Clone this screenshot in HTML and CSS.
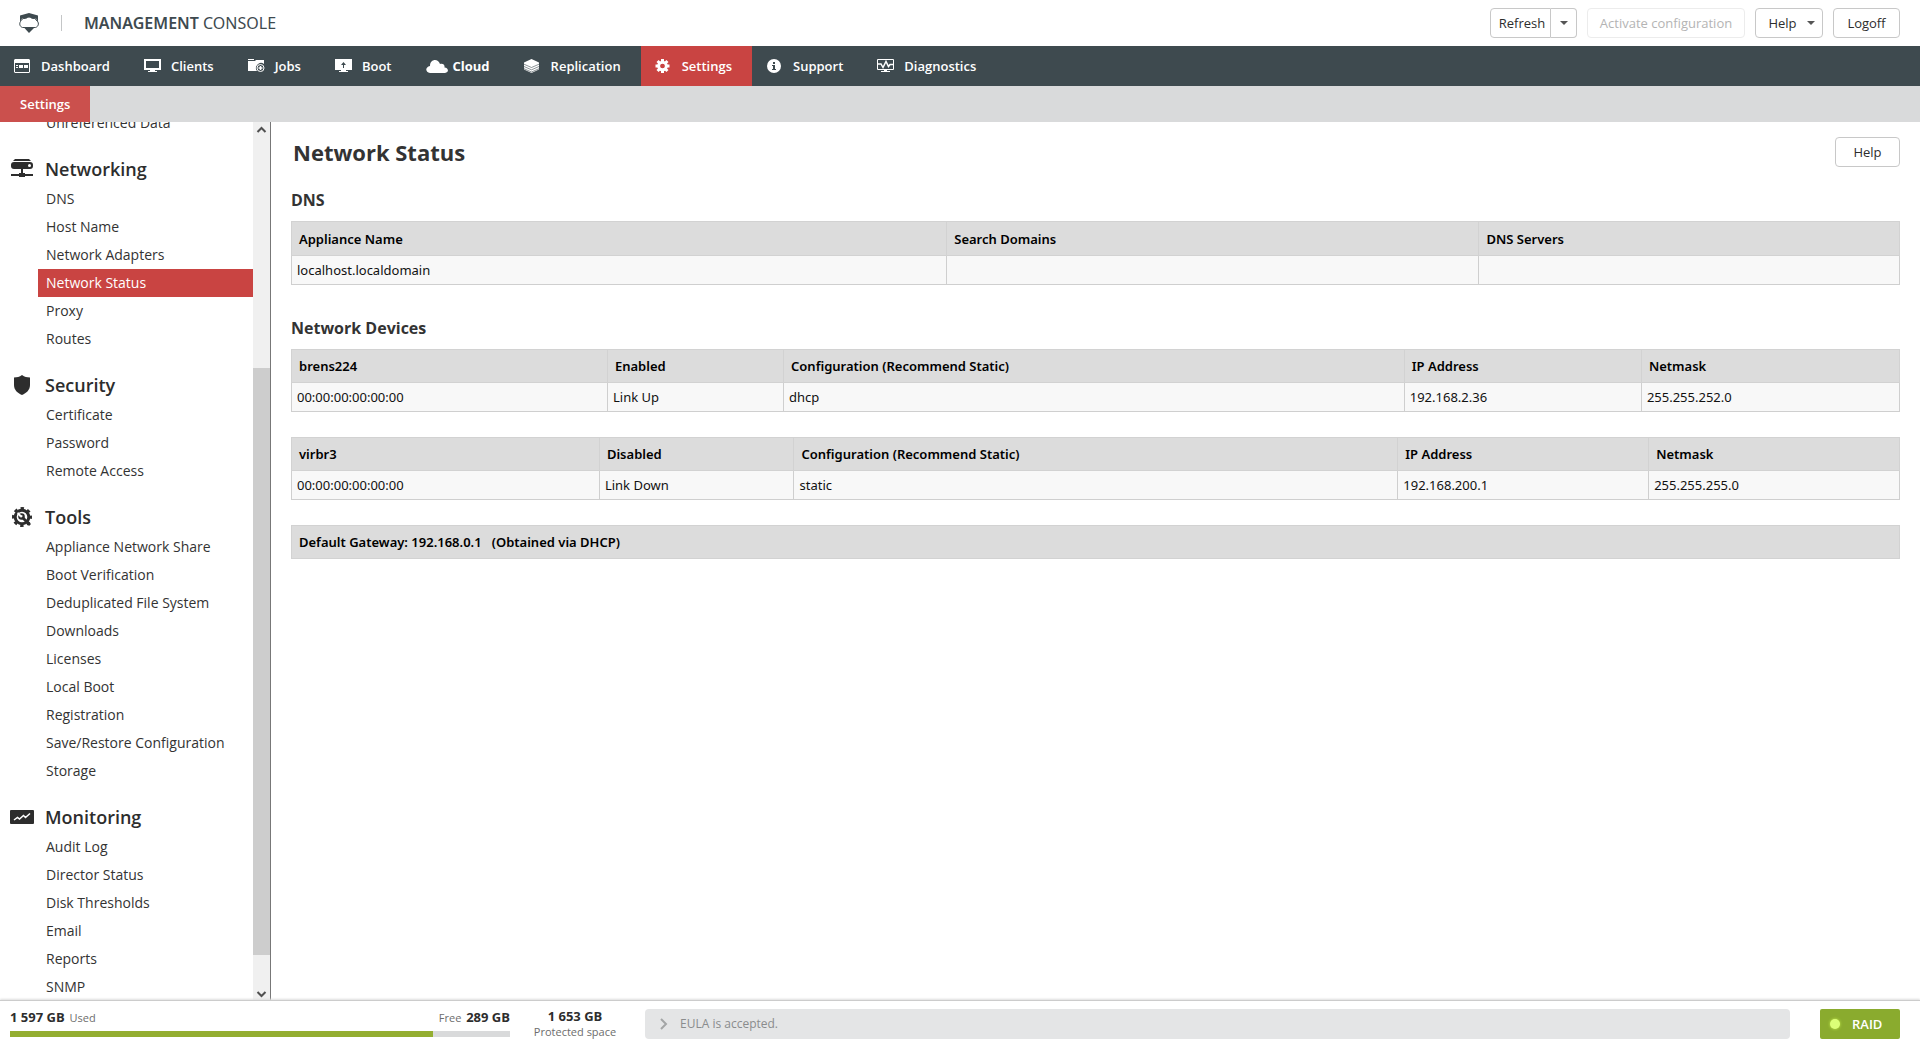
FILE: index.html
```html
<!DOCTYPE html>
<html lang="en">
<head>
<meta charset="utf-8">
<title>Management Console</title>
<link rel="stylesheet" href="styles.css">
</head>
<body>
<header class="top">
  <svg class="logo" width="20" height="20" viewBox="0 0 20 20" aria-hidden="true">
    <path fill="#3e4a4f" d="M10 0 19 2.500 19 9 17 5.500 14.500 6 10 4 5.500 6 3 5.500 1 9 1 2.500z"/>
    <path fill="#3e4a4f" d="M5 14.500h10.500L10 20z"/>
    <path fill="none" stroke="#3e4a4f" stroke-width="1" d="M3.500 14.500C.5 13.500.2 10.500 1.500 8.500 2.500 7 3 6.500 3.500 6 5 4.500 6.500 5 7 5.300 8.500 3.500 11.500 3.500 13 5.300 15 4.500 16.500 5 17 7 20.500 9 20 13.500 16.500 14.500z"/>
  </svg>
  <span class="divider"></span>
  <div class="brand"><strong>MANAGEMENT</strong> CONSOLE</div>
  <div class="actions">
    <div class="split">
      <button class="btn split-main" type="button">Refresh</button>
      <button class="btn split-more" type="button" aria-label="Refresh options"><span class="caret"></span></button>
    </div>
    <button class="btn btn-activate" type="button" disabled>Activate configuration</button>
    <button class="btn btn-menu" type="button">Help<span class="caret"></span></button>
    <button class="btn btn-logoff" type="button">Logoff</button>
  </div>
</header>

<nav class="mainnav">
  <a href="#"><span class="ico"><svg width="16" height="14" viewBox="0 0 16 14"><path fill="#fff" fill-rule="evenodd" d="M1 0h14l1 1v12l-1 1H1l-1-1V1zM1 4v9h14V4z"/><path fill="#fff" d="M2 6h2v1H2zm0 2h2v1H2zm3-2h4v3H5zm5 0h4v3h-4z"/></svg></span>Dashboard</a>
  <a href="#"><span class="ico"><svg width="17" height="14" viewBox="0 0 17 14"><path fill="#fff" fill-rule="evenodd" d="M0 0h17v11H0zM2 2v7h13V2zM6 11h5v1h2v1H4v-1h2z"/></svg></span>Clients</a>
  <a href="#"><span class="ico"><svg width="17" height="14" viewBox="0 0 17 14"><path fill="#fff" d="M0 0h6v1H0zM0 2h7l1-1h8v4a5 5 0 0 0-7 7H0z"/><circle cx="12.500" cy="9" r="3.500" fill="none" stroke="#fff"/><path stroke="#fff" stroke-width="1.500" d="M12.500 7v4M10.500 9h4"/></svg></span>Jobs</a>
  <a href="#"><span class="ico"><svg width="17" height="14" viewBox="0 0 17 14"><path fill="#fff" fill-rule="evenodd" d="M0 0h17v11h-6v1h2v1H4v-1h2v-1H0zM8.500 3 6 6h2v3h1V6h2z"/></svg></span>Boot</a>
  <a class="strong" href="#"><span class="ico"><svg width="22" height="13" viewBox="0 0 22 13"><path fill="#fff" d="M4 13C-1 12-1 7 4 6 4-1 12-2 14 4c3-1 5 1 4.500 3.500C23 8 23 12.500 19 13z"/></svg></span>Cloud</a>
  <a href="#"><span class="ico"><svg width="15" height="14" viewBox="0 0 15 14"><path fill="#fff" d="M7.500 0 15 3.500v7L7.500 14 0 10.500v-7z"/><path fill="none" stroke="#3e4a4f" stroke-width=".6" d="m0 5.200 7.500 3.300L15 5.200M0 7.500l7.500 3.300L15 7.500M0 9.700 7.500 13 15 9.700"/></svg></span>Replication</a>
  <a class="active" href="#"><span class="ico"><svg width="15" height="14" viewBox="0 0 15 14"><g fill="#fff"><path d="M6 0h3v14H6zM.5 5.500h14v3H.5z"/><path d="M6 0h3v14H6zM.5 5.500h14v3H.5z" transform="rotate(45 7.500 7)"/></g><circle cx="7.500" cy="7" r="3.800" fill="#c94442" stroke="#fff" stroke-width="3"/><circle cx="7.500" cy="7" r="2" fill="#c94442"/></svg></span>Settings</a>
  <a href="#"><span class="ico"><svg width="15" height="14" viewBox="0 0 15 14"><circle cx="8" cy="7" r="7" fill="#fff"/><path fill="#3e4a4f" d="M7 3h2v2H7zM6 6h3v4h1v1H6v-1h1V7H6z"/></svg></span>Support</a>
  <a href="#"><span class="ico"><svg width="17" height="14" viewBox="0 0 17 14"><path fill="none" stroke="#fff" d="M.5.5h16v10H.5z"/><path fill="none" stroke="#fff" stroke-width="1.500" d="M1 5h3l2 3.500 3-6 2.500 5L13 5.500h3"/><path fill="#fff" d="M7 11h3v1h3v1H4v-1h3z"/></svg></span>Diagnostics</a>
</nav>

<nav class="subnav"><a href="#">Settings</a></nav>

<div class="body">
  <aside class="side">
    <div class="menu">
      <ul><li><a href="#">Unreferenced Data</a></li></ul>
      <h2><svg width="24" height="20" viewBox="0 0 24 20"><path fill="#2d2d2d" d="M5 0h14l2 2H3z"/><rect x="1" y="3" width="22" height="7" rx="3" fill="#2d2d2d"/><path fill="#2d2d2d" d="M11 9h2v5h2v1h8v2h-8v1H9v-1H1v-2h8v-1h2z"/><circle cx="19.500" cy="6.500" r="1.500" fill="#fff"/></svg>Networking</h2>
      <ul>
        <li><a href="#">DNS</a></li>
        <li><a href="#">Host Name</a></li>
        <li><a href="#">Network Adapters</a></li>
        <li><a class="current" href="#">Network Status</a></li>
        <li><a href="#">Proxy</a></li>
        <li><a href="#">Routes</a></li>
      </ul>
      <h2><svg width="24" height="20" viewBox="0 0 24 20"><path fill="#2d2d2d" d="M12 0c2.500 1.800 5 2.500 8 2.500V10c0 5-3.500 8-8 10-4.500-2-8-5-8-10V2.500C7 2.500 9.500 1.800 12 0z"/></svg>Security</h2>
      <ul>
        <li><a href="#">Certificate</a></li>
        <li><a href="#">Password</a></li>
        <li><a href="#">Remote Access</a></li>
      </ul>
      <h2><svg width="24" height="20" viewBox="0 0 24 20"><g stroke="#2d2d2d" fill="none"><circle cx="12" cy="10" r="6.800" stroke-width="3"/><circle cx="12" cy="10" r="8.800" stroke-width="2.400" stroke-dasharray="3.450 3.460" stroke-dashoffset="1.700"/><path stroke-width="2.800" d="m12 10 8 8"/><circle cx="11.500" cy="9.500" r="2.300" stroke-width="2"/></g><path fill="#fff" d="m8 5 4 4-2 1-3-3z"/></svg>Tools</h2>
      <ul>
        <li><a href="#">Appliance Network Share</a></li>
        <li><a href="#">Boot Verification</a></li>
        <li><a href="#">Deduplicated File System</a></li>
        <li><a href="#">Downloads</a></li>
        <li><a href="#">Licenses</a></li>
        <li><a href="#">Local Boot</a></li>
        <li><a href="#">Registration</a></li>
        <li><a href="#">Save/Restore Configuration</a></li>
        <li><a href="#">Storage</a></li>
      </ul>
      <h2><svg width="24" height="20" viewBox="0 0 24 20"><rect y="3" width="24" height="14" rx="1" fill="#2d2d2d"/><path fill="none" stroke="#fff" stroke-width="1.500" d="m4 13 3.500-2.500 2 1.500 4-3.500 2 2L20 6.500"/></svg>Monitoring</h2>
      <ul>
        <li><a href="#">Audit Log</a></li>
        <li><a href="#">Director Status</a></li>
        <li><a href="#">Disk Thresholds</a></li>
        <li><a href="#">Email</a></li>
        <li><a href="#">Reports</a></li>
        <li><a href="#">SNMP</a></li>
      </ul>
    </div>
    <div class="scroll" aria-hidden="true">
      <svg width="17" height="17" viewBox="0 0 17 17"><path fill="none" stroke="#505050" stroke-width="2" d="m4.500 10 4-4 4 4"/></svg>
      <span class="gap-top"></span><span class="thumb"></span><span class="gap-end"></span>
      <svg width="17" height="17" viewBox="0 0 17 17"><path fill="none" stroke="#505050" stroke-width="2" d="m4.500 9 4 4 4-4"/></svg>
    </div>
  </aside>

  <main class="content">
    <div class="heading">
      <h1>Network Status</h1>
      <button class="btn btn-help" type="button">Help</button>
    </div>
    <h3>DNS</h3>
    <table class="dns">
      <colgroup><col class="d1"><col class="d2"><col></colgroup>
      <thead><tr><th>Appliance Name</th><th>Search Domains</th><th>DNS Servers</th></tr></thead>
      <tbody><tr><td>localhost.localdomain</td><td></td><td></td></tr></tbody>
    </table>
    <h3>Network Devices</h3>
    <table>
      <colgroup><col class="a1"><col class="a2"><col class="a3"><col class="a4"><col></colgroup>
      <thead><tr><th>brens224</th><th>Enabled</th><th>Configuration (Recommend Static)</th><th>IP Address</th><th>Netmask</th></tr></thead>
      <tbody><tr><td>00:00:00:00:00:00</td><td>Link Up</td><td>dhcp</td><td>192.168.2.36</td><td>255.255.252.0</td></tr></tbody>
    </table>
    <table>
      <colgroup><col class="b1"><col class="b2"><col class="b3"><col class="b4"><col></colgroup>
      <thead><tr><th>virbr3</th><th>Disabled</th><th>Configuration (Recommend Static)</th><th>IP Address</th><th>Netmask</th></tr></thead>
      <tbody><tr><td>00:00:00:00:00:00</td><td>Link Down</td><td>static</td><td>192.168.200.1</td><td>255.255.255.0</td></tr></tbody>
    </table>
    <table>
      <thead><tr><th>Default Gateway: 192.168.0.1 &nbsp; (Obtained via DHCP)</th></tr></thead>
    </table>
  </main>
</div>

<footer class="status">
  <div class="usage">
    <div class="labels"><span><b>1 597 GB</b> Used</span><span>Free <b>289 GB</b></span></div>
    <div class="bar"><div class="fill" style="width:84.6%"></div></div>
  </div>
  <div class="protected"><b>1 653 GB</b><span>Protected space</span></div>
  <div class="message"><svg width="10" height="12" viewBox="0 0 10 12"><path fill="none" stroke="#a3a5a6" stroke-width="2" d="m2 1 5 5-5 5"/></svg>EULA is accepted.</div>
  <button class="raid" type="button"><span class="led"></span>RAID</button>
</footer>
</body>
</html>
```
FILE: styles.css
```css
* { box-sizing: border-box; }
body {
  margin: 0;
  height: 100vh;
  display: flex;
  flex-direction: column;
  overflow: hidden;
  background: #fff;
  color: #2d2d2d;
  font: 13px/18px "Open Sans", "Noto Sans", sans-serif;
}
a { color: inherit; text-decoration: none; }
ul { list-style: none; margin: 0; padding: 0; }
svg { display: block; flex: none; }

/* top bar */
.top { flex: none; height: 46px; display: flex; align-items: center; padding: 0 20px 0 19px; }
.divider { width: 1px; height: 16px; margin: 0 22px; background: #c4c6c7; }
.brand { font-family: "Noto Sans", "Open Sans", sans-serif; font-size: 16px; line-height: 22px; color: #3e4a4f; }
.brand strong { font-weight: 600; }
.actions { margin-left: auto; display: flex; gap: 10px; }
.btn {
  height: 30px;
  padding: 0;
  display: flex;
  align-items: center;
  justify-content: center;
  background: #fff;
  border: 1px solid #c8c8c8;
  border-radius: 4px;
  color: #2d2d2d;
  font: 13px/18px "Open Sans", "Noto Sans", sans-serif;
}
.btn:disabled { color: #b4b4b4; border-color: #ececec; }
.split { display: flex; }
.split-main { width: 61px; padding-left: 3px; border-radius: 4px 0 0 4px; }
.split-more { width: 26px; border-left: 0; border-radius: 0 4px 4px 0; }
.btn-activate { width: 158px; }
.btn-menu { width: 68px; gap: 10px; padding-left: 5px; }
.btn-logoff { width: 67px; }
.btn-help { width: 65px; }
.caret { border: 4px solid transparent; border-top-color: #555; border-bottom: 0; }

/* main navigation */
.mainnav {
  flex: none;
  height: 40px;
  display: flex;
  background: #3e4a4f;
  color: #fff;
  font-weight: 600;
}
.mainnav a { display: flex; align-items: center; padding: 0 20px 0 14px; }
.mainnav .active { background: #c94442; }
.mainnav .strong { font-weight: 700; }
.ico { width: 27px; }
.subnav { flex: none; height: 36px; display: flex; background: #d9dadb; }
.subnav a { padding: 9px 20px; background: #cb504d; color: #fff; font-weight: 600; }

/* sidebar */
.body { flex: 1; min-height: 0; display: flex; }
.side { flex: none; width: 271px; display: flex; border-right: 1px solid #777; overflow: hidden; }
.menu { flex: 1; margin-top: -13px; }
.menu h2 {
  height: 48px;
  margin: 0;
  padding: 16px 0 0 10px;
  display: flex;
  align-items: center;
  gap: 11px;
  font-size: 18px;
  font-weight: 600;
  line-height: 24px;
}
.menu li a {
  display: block;
  height: 28px;
  margin-left: 38px;
  padding-left: 8px;
  font-size: 14px;
  line-height: 28px;
  color: #333;
}
.menu li .current { background: #c94442; color: #fff; }
.scroll { flex: none; width: 17px; display: flex; flex-direction: column; background: #f0f0f0; }
.gap-top { flex: 229; }
.thumb { flex: 586; background: #cdcdcd; }
.gap-end { flex: 28; }

/* content */
.content { flex: 1; min-width: 0; padding: 15px 20px 20px; }
.heading { display: flex; align-items: center; justify-content: space-between; margin-bottom: 22px; }
h1 { margin: 0 0 0 2px; font-size: 22px; line-height: 30px; color: #333; }
h3 { margin: 0 0 10px; font-size: 16px; line-height: 22px; color: #333; }
table {
  width: 100%;
  table-layout: fixed;
  border-collapse: collapse;
  margin-bottom: 25px;
  border: 1px solid #cfcfcf;
  color: #111;
  font-family: "Noto Sans", "Open Sans", sans-serif;
}
.dns { margin-bottom: 32px; }
th {
  height: 33px;
  padding: 0 7px;
  text-align: left;
  font-weight: 600;
  background: #dcdcdc;
  border: 1px solid #d2d2d2;
  color: #000;
}
.dns th { height: 34px; }
td { height: 29px; padding: 0 5px; background: #f8f8f8; border: 1px solid #cfcfcf; }
.d1 { width: 40.75%; }
.d2 { width: 33.1%; }
.a1 { width: 19.65%; }
.a2 { width: 10.95%; }
.a3 { width: 38.6%; }
.a4 { width: 14.75%; }
.b1 { width: 19.15%; }
.b2 { width: 12.1%; }
.b3 { width: 37.55%; }
.b4 { width: 15.6%; }

/* status bar */
.status {
  flex: none;
  height: 47px;
  padding: 0 20px 0 10px;
  display: flex;
  align-items: center;
  border-top: 1px solid #ccc;
  box-shadow: 0 -1px 2px #ddd;
  background: #fff;
  position: relative;
  font-size: 11px;
  line-height: 16px;
  color: #6d6d6d;
}
.status b { font-size: 13px; color: #2d2d2d; }
.usage { width: 500px; padding-bottom: 2px; }
.labels { display: flex; justify-content: space-between; margin-bottom: 5px; }
.labels b { margin: 0 2px 0 0; }
.labels span:last-child b { margin: 0 0 0 2px; }
.bar { height: 6px; background: #d9dadb; }
.fill { height: 6px; background: #94ae31; }
.protected { width: 130px; margin-right: 5px; display: flex; flex-direction: column; align-items: center; }
.message {
  flex: 1;
  height: 30px;
  padding-left: 14px;
  display: flex;
  align-items: center;
  gap: 11px;
  background: #e4e5e6;
  border-radius: 4px;
  font-size: 12px;
  color: #8a8c8d;
}
.raid {
  width: 80px;
  height: 30px;
  margin-left: 30px;
  padding: 0 0 0 10px;
  display: flex;
  align-items: center;
  gap: 12px;
  border: 0;
  border-radius: 2px;
  background: #8aab2e;
  color: #fff;
  font: 600 13px/18px "Open Sans", sans-serif;
}
.led { width: 10px; height: 10px; border-radius: 50%; background: #dcff78; box-shadow: 0 0 3px #c8f050; }
```
